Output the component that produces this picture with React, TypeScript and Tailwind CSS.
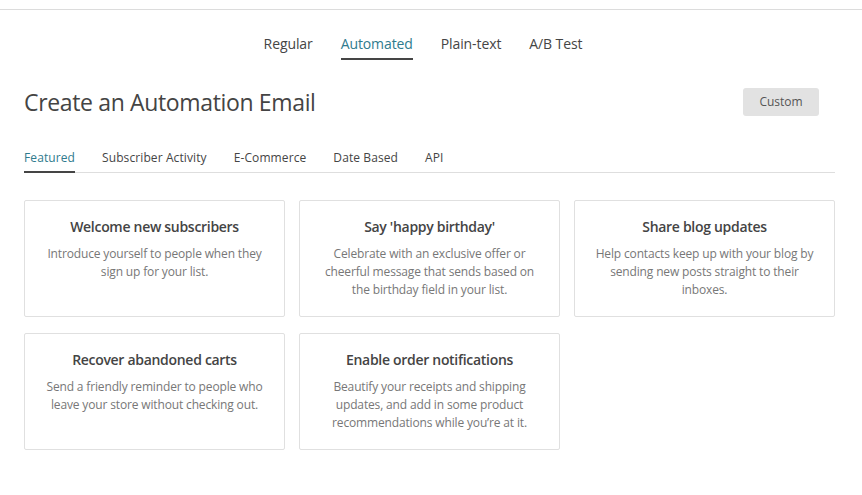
import React from "react";

const cards = [
  { t: "Welcome new subscribers", d: "Introduce yourself to people when they sign up for your list." },
  { t: "Say 'happy birthday'", d: "Celebrate with an exclusive offer or cheerful message that sends based on the birthday field in your list." },
  { t: "Share blog updates", d: "Help contacts keep up with your blog by sending new posts straight to their inboxes." },
  { t: "Recover abandoned carts", d: "Send a friendly reminder to people who leave your store without checking out." },
  { t: "Enable order notifications", d: "Beautify your receipts and shipping updates, and add in some product recommendations while you’re at it." },
];

export default function App() {
  return (
    <div className="w-[862px] h-[495px] bg-white overflow-hidden text-[#454545]" style={{ fontFamily: '"Open Sans", sans-serif' }}>
      <div className="h-[10px] border-b border-[#dcdcdc]" />
      <div className="flex justify-center gap-[28px] pt-[23px] pr-[16px] text-[14px] tracking-[-0.1px] font-medium">
        {["Regular", "Automated", "Plain-text", "A/B Test"].map((t) => (
          <div key={t} className={`pb-[4px] border-b-2 ${t === "Automated" ? "text-[#2f7b8e] border-[#454545]" : "border-transparent"}`}>{t}</div>
        ))}
      </div>
      <div className="px-[24px]">
        <div className="flex items-center justify-between mt-[25px] pr-[19px]">
          <h1 className="text-[23px] tracking-[-0.35px] text-[#444]">Create an Automation Email</h1>
          <button className="w-[76px] h-[28px] bg-[#e2e2e2] rounded-[3px] text-[12px] text-[#555]">Custom</button>
        </div>
        <div className="flex gap-[27px] mt-[29px] border-b border-[#dedede] text-[12px] tracking-[0.1px] font-medium w-[811px]">
          {["Featured", "Subscriber Activity", "E-Commerce", "Date Based", "API"].map((t) => (
            <div key={t} className={`pb-[4px] -mb-px border-b-2 ${t === "Featured" ? "text-[#2f7b8e] border-[#454545]" : "border-transparent"}`}>{t}</div>
          ))}
        </div>
        <div className="grid grid-cols-[261px_261px_261px] gap-x-[14px] gap-y-[16px] mt-[27px]">
          {cards.map((c) => (
            <div key={c.t} className="h-[117px] border border-[#e0e0e0] rounded-[2px] px-[20px] pt-[15px] text-center">
              <div className="text-[14px] font-semibold tracking-[-0.3px] text-[#444]">{c.t}</div>
              <div className="mt-[8px] text-[12px] leading-[18px] tracking-[-0.15px] text-[#777]">{c.d}</div>
            </div>
          ))}
        </div>
      </div>
    </div>
  );
}
